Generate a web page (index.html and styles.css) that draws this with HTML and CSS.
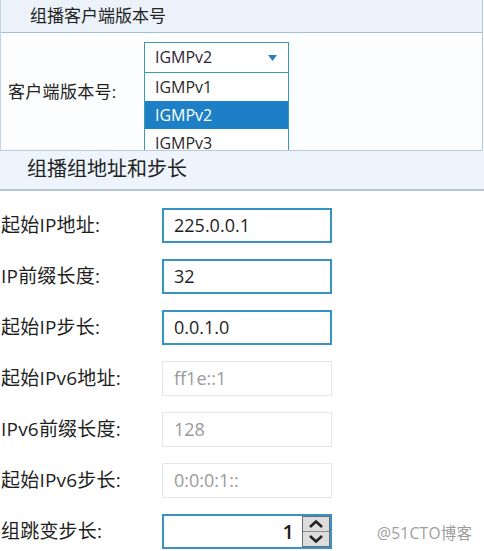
FILE: index.html
```html
<!DOCTYPE html>
<html lang="zh">
<head>
<meta charset="utf-8">
<link rel="stylesheet" href="styles.css">
</head>
<body>
<div class="page">
  <section class="panel">
    <div class="hdr1">组播客户端版本号</div>
    <div class="panel-body">
      <div class="plabel">客户端版本号:</div>
      <div class="select-wrap">
        <div class="select">
          <span class="sel-text">IGMPv2</span>
          <svg class="caret" width="9" height="6" viewBox="0 0 9 6"><path d="M0 0H9L4.5 6Z" fill="#2a7fc0"/></svg>
        </div>
        <ul class="dropdown">
          <li>IGMPv1</li>
          <li class="active">IGMPv2</li>
          <li>IGMPv3</li>
        </ul>
      </div>
    </div>
  </section>
  <div class="hdr2">组播组地址和步长</div>
  <div class="form">
    <label class="lbl">起始IP地址:</label>
    <div class="inp">225.0.0.1</div>
    <label class="lbl">IP前缀长度:</label>
    <div class="inp">32</div>
    <label class="lbl">起始IP步长:</label>
    <div class="inp">0.0.1.0</div>
    <label class="lbl">起始IPv6地址:</label>
    <div class="inp disabled">ff1e::1</div>
    <label class="lbl">IPv6前缀长度:</label>
    <div class="inp disabled">128</div>
    <label class="lbl">起始IPv6步长:</label>
    <div class="inp disabled">0:0:0:1::</div>
    <label class="lbl">组跳变步长:</label>
    <div class="inp spin">
      <span class="spin-val">1</span>
      <div class="spin-btns">
        <div class="sb"><svg width="18" height="10" viewBox="0 0 18 10"><path d="M3 8L9 2.5L15 8" fill="none" stroke="#222" stroke-width="2.6"/></svg></div>
        <div class="sb"><svg width="18" height="10" viewBox="0 0 18 10"><path d="M3 2L9 7.5L15 2" fill="none" stroke="#222" stroke-width="2.6"/></svg></div>
      </div>
    </div>
  </div>
  <div class="watermark">@51CTO博客</div>
</div>
</body>
</html>
```

FILE: styles.css
```css
* { box-sizing: border-box; margin: 0; padding: 0; }
html, body { background: #fff; }
body {
  font-family: "Open Sans", "Noto Sans CJK SC", sans-serif;
  color: #222;
  width: 484px;
  height: 551px;
  overflow: hidden;
}
.page { position: relative; width: 484px; height: 551px; }

.panel {
  width: 483px;
  border-left: 1px solid #c3d4e4;
  border-right: 1px solid #b3c8dc;
}
.hdr1 {
  height: 33px;
  background: #ebf2fa;
  border-bottom: 1px solid #a3c0da;
  font-size: 17px;
  line-height: 31px;
  padding-left: 29px;
  color: #222;
}
.panel-body {
  height: 118px;
  background: #fcfdff;
  border-bottom: 1px solid #b9c9d8;
  display: flex;
  align-items: flex-start;
  padding-left: 7px;
  overflow: hidden;
}
.plabel {
  width: 136px;
  font-size: 17px;
  line-height: 24px;
  margin-top: 47px;
  letter-spacing: 0.3px;
}
.select-wrap {
  position: relative;
  width: 145px;
  margin-top: 9px;
}
.select {
  height: 31px;
  border: 1px solid #3a9bb0;
  background: #fff;
  display: flex;
  align-items: center;
  justify-content: space-between;
  padding: 0 11px 0 10px;
}
.sel-text { font-size: 16px; color: #2e2336; line-height: 29px; }
.caret { margin-top: 1px; }
.dropdown {
  position: absolute;
  left: 0;
  top: 30px;
  width: 145px;
  list-style: none;
  border: 1px solid #3a9bb0;
  background: #fff;
}
.dropdown li {
  height: 28px;
  line-height: 28px;
  font-size: 16px;
  padding-left: 10px;
  color: #2a2a2a;
}
.dropdown li.active { background: #1d7fc6; color: #fff; }

.hdr2 {
  height: 40px;
  background: #edf4fb;
  border-bottom: 2px solid #b7c6d3;
  font-size: 20px;
  line-height: 36px;
  padding-left: 27px;
  color: #222;
}

.form {
  display: grid;
  grid-template-columns: 162px 170px;
  grid-auto-rows: 35px;
  row-gap: 16px;
  padding-top: 17px;
  padding-left: 0;
}
.lbl {
  font-size: 19px;
  line-height: 35px;
  padding-left: 1px;
  white-space: nowrap;
  color: #1e1e1e;
  letter-spacing: 0.2px;
}
.inp {
  border: 2px solid #3793c4;
  background: #fff;
  font-size: 18px;
  line-height: 31px;
  padding-left: 10px;
  color: #1e1e1e;
}
.inp.disabled {
  border: 1px solid #e4e6e8;
  color: #9a9a9a;
  line-height: 33px;
  padding-left: 11px;
}
.inp.spin {
  display: flex;
  align-items: stretch;
  padding-left: 0;
  border-color: #3a8fc4;
}
.spin-val {
  flex: 1;
  text-align: right;
  padding-right: 8px;
  font-size: 20px;
  font-weight: 600;
}
.spin-btns {
  width: 28px;
  display: flex;
  flex-direction: column;
  border: 1px solid #6a6e72;
  background: #dcdcdc;
}
.sb {
  flex: 1;
  display: flex;
  align-items: center;
  justify-content: center;
}
.sb + .sb { border-top: 1px solid #8a8e92; }

.watermark {
  position: absolute;
  left: 377px;
  top: 521px;
  font-size: 15.5px;
  color: #9c9c9c;
  letter-spacing: 0.3px;
}
```
